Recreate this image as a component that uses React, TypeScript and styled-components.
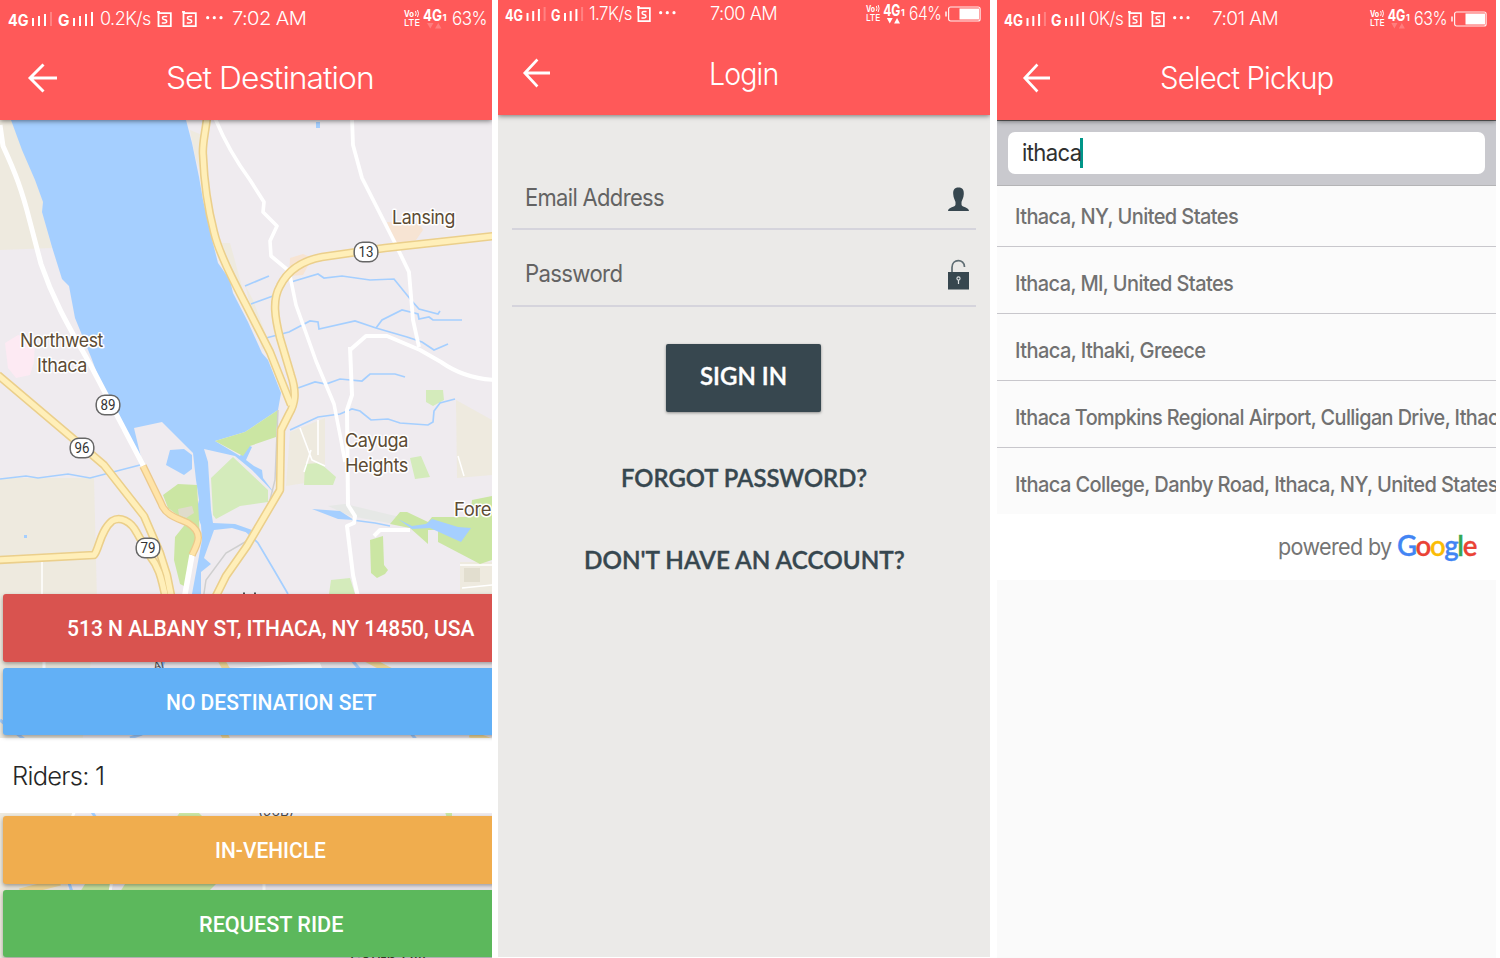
import React, { useLayoutEffect, useRef, useState } from 'react';
import styled, { createGlobalStyle, css } from 'styled-components';

const Global = createGlobalStyle`
  *, *::before, *::after { box-sizing: border-box; }
  html, body { margin: 0; padding: 0; background: #fff; overflow: hidden; }
  body { font-family: Inter, Roboto, "Liberation Sans", sans-serif; }
`;

/* ---------- text squeezed to a given width ---------- */

const FitBox = styled.span<{ $w: number; $size: number; $weight: number; $font?: string; $gap?: number; $up?: number; $down?: number; $track?: number; $thick?: number }>`
  display: block;
  flex: none;
  width: ${p => p.$w}px;
  margin-left: ${p => p.$gap ?? 0}px;
  padding-top: ${p => p.$down ?? 0}px;
  padding-bottom: ${p => p.$up ?? 0}px;
  white-space: nowrap;
  font-size: ${p => p.$size}px;
  font-weight: ${p => p.$weight};
  letter-spacing: ${p => p.$track ?? 0}em;
  line-height: 1.25;
  ${p => p.$font && css`font-family: ${p.$font}, sans-serif;`}
  ${p => p.$thick && css`-webkit-text-stroke: ${p.$thick}px currentColor;`}
`;
const FitInner = styled.span`
  display: inline-block;
  transform-origin: 0 50%;
`;

type FitProps = { w: number; size: number; weight?: number; font?: string; gap?: number; up?: number; down?: number; track?: number; thick?: number; children: React.ReactNode };
function Fit({ w, size, weight = 400, font, gap, up, down, track, thick, children }: FitProps) {
  const ref = useRef<HTMLSpanElement>(null);
  const [scale, setScale] = useState(1);
  useLayoutEffect(() => {
    const natural = ref.current?.offsetWidth;
    if (natural) setScale(w / natural);
  }, [w]);
  return (
    <FitBox $w={w} $size={size} $weight={weight} $font={font} $gap={gap} $up={up} $down={down} $thick={thick} $track={track ?? (font ? 0 : -0.03)}>
      <FitInner ref={ref} style={{ transform: `scaleX(${scale})` }}>{children}</FitInner>
    </FitBox>
  );
}

/* ---------- frame ---------- */

const Page = styled.main`
  display: flex;
  width: 1500px;
  height: 958px;
  background: #fff;
`;
const Screen = styled.section<{ $w: number; $h?: number; $gap?: number; $bg: string }>`
  display: flex;
  flex-direction: column;
  flex: none;
  width: ${p => p.$w}px;
  height: ${p => p.$h ?? 958}px;
  margin-left: ${p => p.$gap ?? 0}px;
  background: ${p => p.$bg};
  overflow: hidden;
`;
const Header = styled.header<{ $h: number }>`
  position: relative;
  z-index: 2;
  flex: none;
  height: ${p => p.$h}px;
  background: #ff5959;
  color: #fff;
  box-shadow: 0 1px 5px rgba(0, 0, 0, 0.5);
`;
const StatusBar = styled.div<{ $h: number }>`
  display: flex;
  align-items: center;
  height: ${p => p.$h}px;
`;
const TitleBar = styled.div<{ $h: number; $top?: number }>`
  display: flex;
  align-items: center;
  height: ${p => p.$h}px;
  padding-top: ${p => p.$top ?? 0}px;
`;
const Glyph = styled.svg<{ $gap?: number; $lift?: number }>`
  display: block;
  flex: none;
  overflow: visible;
  margin-left: ${p => p.$gap ?? 0}px;
  margin-bottom: ${p => p.$lift ?? 0}px;
`;

function Signal({ label, full, w, gap, first, pitch = 6 }: { label: string; full?: boolean; w: number; gap: number; first: number; pitch?: number }) {
  const hs = [8, 10, 12, 14];
  return (
    <Glyph $gap={gap} width={w} height="20" viewBox={`0 0 ${w} 20`} fill="#fff">
      <text x="0" y="17" fontSize="15.5" fontWeight="700" fontFamily="Inter" textLength={first - 4} lengthAdjust="spacingAndGlyphs">{label}</text>
      {hs.map((h, i) => (
        <rect key={h} x={first - 0.5 + i * pitch} y={17 - h} width="2" height={h} opacity={i === 3 && !full ? 0.25 : 1} />
      ))}
    </Glyph>
  );
}
function AlarmIcon({ gap, w = 15 }: { gap: number; w?: number }) {
  return (
    <Glyph $gap={gap} width={w} height="18" viewBox="0 0 15 18" preserveAspectRatio="none" fill="none" stroke="#fff">
      <path d="M1.500 3.200H13.800V16.200H1.500V1" strokeWidth="1.800" />
      <path d="M0 1.900h3" strokeWidth="1.600" />
      <path d="M10.200 6.500H7.400C4.800 6.500 4.700 9.200 7.300 9.600C10.500 10 10.300 13 7.600 13H4.800" strokeWidth="1.500" />
    </Glyph>
  );
}
function Dots({ gap }: { gap: number }) {
  return (
    <Glyph $gap={gap} width="18" height="6" viewBox="0 0 18 6" fill="#fff">
      <circle cx="1.700" cy="1.700" r="1.600" /><circle cx="8.300" cy="1.700" r="1.600" /><circle cx="15" cy="1.700" r="1.600" />
    </Glyph>
  );
}
function Network({ gap, active, w = 44 }: { gap: number; active?: boolean; w?: number }) {
  return (
    <Glyph $gap={gap} $lift={1} width={w} height="22" viewBox="0 0 44 22" preserveAspectRatio="none" fill="#fff" fontFamily="Inter">
      <text x="1" y="10" fontSize="8.500" fontWeight="700" textLength="10" lengthAdjust="spacingAndGlyphs">Vo</text>
      <path d="M12.500 4q1.300 2.500 0 5M14.500 3q2 3.500 0 7" fill="none" stroke="#fff" strokeWidth="1" />
      <text x="1" y="19" fontSize="9.500" fontWeight="500" textLength="16" lengthAdjust="spacingAndGlyphs">LTE</text>
      <text x="20" y="14" fontSize="16.500" fontWeight="700" textLength="19" lengthAdjust="spacingAndGlyphs">4G</text>
      <text x="39.600" y="14" fontSize="9.500" fontWeight="700">1</text>
      <path d="M24 16h6.500l-3.250 5.500zM32 21.500h6.500l-3.250-5.500z" opacity={active ? 1 : 0.22} />
    </Glyph>
  );
}
function Battery({ gap }: { gap: number }) {
  return (
    <Glyph $gap={gap} width="37" height="16" viewBox="0 0 37 16">
      <rect x="0.300" y="5.500" width="1.400" height="5" fill="#fff" />
      <rect x="3.600" y="1" width="31.500" height="14" rx="2" fill="none" stroke="#fff" strokeWidth="1.200" opacity="0.900" />
      <rect x="14.500" y="2.500" width="19.500" height="11" fill="#fff" />
    </Glyph>
  );
}
function BackArrow({ gap, w }: { gap: number; w: number }) {
  return (
    <Glyph $gap={gap} $lift={2} width={w} height="30" viewBox="0 0 29 30" preserveAspectRatio="none" fill="none" stroke="#fff" strokeWidth="2.900">
      <path d="M15.500 1.500 2 15 15.500 28.500M2 15H29" />
    </Glyph>
  );
}

/* ---------- destination screen ---------- */

const MapArea = styled.div`
  position: relative;
  flex: 1;
  overflow: hidden;
`;
const MapSvg = styled.svg`
  position: absolute;
  inset: 0;
  display: block;
`;
const Controls = styled.div`
  position: relative;
  display: flex;
  flex-direction: column;
  width: 536px;
  padding-top: 474px;
`;
const ActionButton = styled.button<{ $bg: string; $h: number; $mt?: number }>`
  display: flex;
  align-items: center;
  justify-content: center;
  flex: none;
  position: relative;
  width: 535px;
  height: ${p => p.$h}px;
  margin: ${p => p.$mt ?? 0}px 0 0 3px;
  padding: 0;
  border: 0;
  border-radius: 3px;
  background: ${p => p.$bg};
  color: #fff;
  box-shadow: 0 2px 4px rgba(0, 0, 0, 0.35);
`;
const RidersRow = styled.div`
  display: flex;
  align-items: center;
  height: 75px;
  margin-top: 3px;
  background: #fff;
  color: #262626;
`;

const YELLOW_ROADS = [
  'M207 118C205 135 202 145 203 155C204 180 207 205 214 232C219 253 232 278 246 305L270 352L291 405',
  'M495 236L440 242L385 248L322 257C300 261 287 272 280 286C272 300 275 318 280 338L291 375C297 393 295 404 289 414L281 430L280 490L247 546L226 576L214 600L212 660',
  'M-2 375L70 436L104 465L144 516L160 553L167 575L172 600',
  'M-2 560L94 555C99 550 100 531 112 521C120 516 131 521 137 533L150 556C158 566 161 575 166 600',
];
const WHITE_ROADS: [string, number][] = [
  ['M215 118Q228 150 250 180L264 202L263 212L277 226L270 241L271 256L289 271L296 305L316 361L334 404L341 440L345 462', 3.6],
  ['M352 118L353 145L362 178L395 243L409 272L413 320L419 347', 3.8],
  ['M350 350L366 336L387 336L420 350L441 362C458 374 475 379 495 380', 4],
  ['M350 347L352 395L347 410L348 505L355 516L354 523L347 526L353 575L361 610', 4],
  ['M374 536L380 530L410 530', 4],
  ['M300 428L312 460L325 466M311 450L304 472M318 420L318 455', 1.6],
];
const STREAMS = [
  'M245 286L269 276M251 304L273 296M291 282L318 274L324 278L342 276L370 280L394 279L411 300L419 309L438 314L440 311',
  'M266 338L289 332L310 321L318 322L319 329L355 321L376 328L407 337L422 342L434 350L448 344M376 328L382 320L402 310L418 314L419 319L429 317L433 320L462 320',
  'M298 388L315 382L326 384L340 379L362 381L370 374L395 374L405 377',
  'M290 430L318 417L340 414L352 409L360 411L371 420L388 419L400 423L428 425L433 422L434 411L440 403L455 399',
  'M0 479L26 476L38 478L68 474L90 478L140 465',
  'M245 530L258 543L274 570L288 594',
  'M352 520L375 523L390 526',
];
const LABELS: [string, number, number, number][] = [
  ['Northwest', 20, 347, 83],
  ['Ithaca', 37, 372, 50],
  ['Lansing', 392, 223.5, 63],
  ['Cayuga', 345, 447, 63],
  ['Heights', 345, 472, 63],
  ['Fore', 454, 515.5, 37],
];
const SHIELDS: [string, number, number][] = [['13', 366, 252], ['89', 108, 405], ['96', 82, 448], ['79', 148, 548]];

function CityMap() {
  return (
    <MapSvg width="492" height="838" viewBox="0 120 492 838">
      <rect y="120" width="492" height="838" fill="#efebef" />
      <g fill="#eeeadf">
        <path d="M0 120H11L35 180L43 202L42 212L52 248L0 250z" />
        <path d="M0 478L94 478L97 600L60 960H0z" />
        <path d="M290 432L325 418L325 480L286 486z" />
        <path d="M456 400L492 420V475L457 478z" />
        <path d="M460 562H492V596H460zM190 130L202 135L204 180L196 160zM222 243H230L243 290L236 292z" />
        <path d="M245 285L253 300L268 340L262 350z" />
      </g>
      <path d="M387 222L420 224L423 230L416 240L395 246zM290 258L303 254L312 258L303 275L289 276z" fill="#f7e4d3" />
      <path d="M5 343L18 335L35 340L34 362L30 375L16 378L8 368z" fill="#fdeaf3" />
      <path d="M328 506L345 504L400 517L394 524L350 516z" fill="#e6e8e6" />
      <path d="M11 120L22 150L35 180L43 202L42 212L52 247L62 279L69 286L75 318L91 357L104 392L118 420L122 430L127 432L143 466L134 428L162 422L193 453L196 480L199 500L196 512L201 525L202 540L192 594L192 600H201V572L211 564L204 558L214 530L232 528L252 534V530L235 524L213 523L211 510L208 462L204 449L235 456L252 470L275 494L263 478L262 470L254 466L246 460L252 447L246 444L244 450L240 456L215 441L245 432L278 410L281 393L268 360L262 353L248 322L233 293L230 280L218 263L213 243L203 200L199 177L192 143L186 120z" fill="#a5cfff" />
      <path d="M170 450L184 449L192 455L192 469L184 475L166 465z" fill="#a5cfff" />
      <path d="M316 122h4v6h-4zM24 535h3v3h-3z" fill="#a5cfff" />
      <g fill="#cbe6a3">
        <path d="M215 441L245 432L278 410L276 437L250 446L243 456z" />
        <path d="M163 495L178 484L197 485L199 520L200 545L192 555L184 586L180 584L174 560L175 537L187 522L168 508z" />
        <path d="M370 540L383 536L384 565L388 570L385 574L377 578L371 573z" />
        <path d="M390 524L400 512L407 512L428 522L432 517L470 517L472 500L492 496V560L480 564L438 542V530L428 530L428 544L410 528z" />
      </g>
      <g fill="#d4ebbb">
        <path d="M211 478L233 457L250 473L268 490L268 502L240 506L216 519L213 515z" />
        <path d="M426 390H443L444 400L433 406L426 402zM305 464L320 463L336 477L333 485H304zM410 458L421 456L430 477L415 479zM331 580L350 578L355 594H329z" />
      </g>
      <path d="M178 509L192 506L194 513L186 518L179 515z" fill="#dfdccb" />
      <path d="M312 509L340 511L354 520L338 519zM398 519L412 526L426 524L432 519L458 527L471 528L461 542L430 528L412 529z" fill="#a5cfff" />
      <g fill="none" stroke="#a5cfff" strokeWidth="1.7">{STREAMS.map(d => <path key={d} d={d} />)}</g>
      <path d="M278 410L275 480L270 500M252 538L226 553L206 580L203 600" fill="none" stroke="#cfcfcf" strokeWidth="1.500" />
      <path d="M42 560V600M458 456L464 476M460 565H492M462 588L492 585" stroke="#fff" strokeWidth="1.500" fill="none" />
      <path d="M464 568h16v14h-16z" fill="#e2decf" />
      <g fill="none" stroke="#fff" strokeLinejoin="round">{WHITE_ROADS.map(([d, w]) => <path key={d} d={d} strokeWidth={w} />)}</g>
      <path d="M0 125L3 146C15 172 22 190 30 222L41 264C55 305 72 332 90 364L144 467" fill="none" stroke="#fff" strokeWidth="5" />
      <path d="M192 555L184 600" stroke="#fff" strokeWidth="5.500" />
      <path d="M143 466L161 503C165 516 180 519 188 523C204 533 198 543 192 555" fill="none" stroke="#ecc98c" strokeWidth="7.500" />
      <path d="M143 466L161 503C165 516 180 519 188 523C204 533 198 543 192 555" fill="none" stroke="#ffe4a8" strokeWidth="5" />
      <g fill="none" stroke="#ebcf8b" strokeWidth="8.500" strokeLinejoin="round">{YELLOW_ROADS.map(d => <path key={d} d={d} />)}</g>
      <g fill="none" stroke="#ffefb9" strokeWidth="5.400" strokeLinejoin="round">{YELLOW_ROADS.map(d => <path key={d} d={d} />)}</g>

      {/* slivers that stay visible between the action buttons */}
      <path d="M229 668L320 663L322 668z" fill="#fff" />
      <path d="M365 658L392 672M220 658L228 672M20 892L60 882M470 734L492 742M222 730L228 742" stroke="#f5dc9a" strokeWidth="7" />
      <path d="M165 658L160 672M350 658L362 672M0 720L25 740M130 738L142 734M410 732L418 742M68 880L72 892M150 880L156 892M92 812L96 818" stroke="#a5cfff" strokeWidth="3" />
      <path d="M180 812H198L204 818H176zM445 812H452V818H447zM85 884L112 884L108 892H80zM125 884H216L208 892H120z" fill="#cbe6a3" />
      <path d="M44 658V672M75 810L72 818M264 880V892M112 880L110 892" stroke="#fff" strokeWidth="3" />
      <g fontFamily="Inter" fill="#4d4d4d" fontSize="13">
        <text x="258" y="815.500" textLength="36" lengthAdjust="spacingAndGlyphs">(96B)</text>
        <text x="350" y="967" fontSize="17" fill="#4e4632" textLength="76">South Hill</text>
        <text x="154" y="669" fontSize="11" transform="rotate(-12 160 668)">Al</text>
        <path d="M243 594h2v-1.500h-2zM254 594h2v-1.500h-2z" />
      </g>

      <g fontFamily="Inter" fontSize="18.500" fontWeight="380" letterSpacing="-0.4" fill="#5c4b34" stroke="#fff" strokeWidth="3" strokeLinejoin="round" paintOrder="stroke">
        {LABELS.map(([t, x, y, w]) => <text key={t} x={x} y={y} textLength={w} lengthAdjust="spacingAndGlyphs">{t}</text>)}
      </g>
      {SHIELDS.map(([n, x, y]) => (
        <g key={n}>
          <rect x={x - 11.800} y={y - 9.800} width="23.600" height="19.600" rx="8.500" fill="#fff" stroke="#666" strokeWidth="1.500" />
          <text x={x - 7.500} y={y + 4.800} fontFamily="Roboto" fontSize="14" fill="#333" textLength="15" lengthAdjust="spacingAndGlyphs">{n}</text>
        </g>
      ))}
    </MapSvg>
  );
}

/* ---------- login screen ---------- */

const LoginBody = styled.div`
  display: flex;
  flex-direction: column;
  align-items: center;
  padding: 50px 14px 0;
  color: #37474f;
`;
const Field = styled.label<{ $h: number }>`
  display: flex;
  align-items: flex-end;
  justify-content: space-between;
  align-self: stretch;
  height: ${p => p.$h}px;
  padding: 0 6px 15px 13px;
  border-bottom: 2px solid #d5d4dc;
  color: #636363;
`;
const SignInButton = styled.button`
  display: flex;
  align-items: center;
  justify-content: center;
  width: 155px;
  height: 68px;
  margin: 37px 0 0 -1px;
  padding: 0;
  border: 0;
  border-radius: 2px;
  background: #37474f;
  color: #fff;
  box-shadow: 0 1px 3px rgba(0, 0, 0, 0.4);
`;
const LinkButton = styled.button<{ $mt: number }>`
  display: flex;
  margin: ${p => p.$mt}px 0 0 0;
  padding: 0;
  border: 0;
  background: none;
  color: #37474f;
`;

/* ---------- pickup screen ---------- */

const SearchBar = styled.div`
  display: flex;
  flex: none;
  height: 66px;
  padding: 11px 11px 12px;
  border-top: 1px solid #666;
  border-bottom: 1px solid #b4b4b6;
  background: #c9c9ce;
`;
const SearchInput = styled.div`
  display: flex;
  align-items: center;
  flex: 1;
  height: 42px;
  padding-left: 14px;
  border-radius: 7px;
  background: #fff;
  color: #303030;
`;
const Caret = styled.i`
  width: 3px;
  height: 30px;
  margin-left: -1px;
  background: #009688;
`;
const Result = styled.div`
  display: flex;
  align-items: center;
  flex: none;
  height: 67px;
  padding: 7px 0 0 18px;
  border-top: 1px solid #c8c7cc;
  background: #fbfbfb;
  color: #717171;
  overflow: hidden;
  &:first-child { height: 60px; border-top: 0; padding-top: 2px; }
`;
const Results = styled.div`
  display: flex;
  flex-direction: column;
`;
const Attribution = styled.div`
  display: flex;
  align-items: center;
  flex: none;
  height: 66px;
  padding-left: 281px;
  background: #fff;
  color: #757575;
`;
const Letter = styled.b<{ $c: string }>`
  font-weight: inherit;
  color: ${p => p.$c};
`;

const PLACES: [string, number][] = [
  ['Ithaca, NY, United States', 223],
  ['Ithaca, MI, United States', 218],
  ['Ithaca, Ithaki, Greece', 190],
  ['Ithaca Tompkins Regional Airport, Culligan Drive, Ithaca', 495],
  ['Ithaca College, Danby Road, Ithaca, NY, United States', 483],
];
const GOOGLE: [string, string][] = [['G', '#4285f4'], ['o', '#ea4335'], ['o', '#fbbc05'], ['g', '#4285f4'], ['l', '#34a853'], ['e', '#ea4335']];

export default function App() {
  return (
    <>
      <Global />
      <Page>
        <Screen $w={492} $bg="#efebef">
          <Header $h={120}>
            <StatusBar $h={37}>
              <Signal label="4G" w={44} gap={8} first={24.5} />
              <Signal label="G" w={36} gap={6} first={15.5} full />
              <Fit w={51} size={18} weight={350} gap={6} down={2}>0.2K/s</Fit>
              <AlarmIcon gap={6} />
              <AlarmIcon gap={10} />
              <Dots gap={9} />
              <Fit w={74} size={18.5} weight={350} gap={8}>7:02 AM</Fit>
              <Network gap={97} active={false} />
              <Fit w={35} size={18.5} weight={350} gap={5} down={1}>63%</Fit>
            </StatusBar>
            <TitleBar $h={83}>
              <BackArrow gap={28} w={29} />
              <Fit w={208} size={31} weight={330} gap={109}>Set Destination</Fit>
            </TitleBar>
          </Header>
          <MapArea>
            <CityMap />
            <Controls>
              <ActionButton $bg="#d9534f" $h={68}><Fit w={407} size={21.5} weight={500} font="Roboto" down={2}>513 N ALBANY ST, ITHACA, NY 14850, USA</Fit></ActionButton>
              <ActionButton $bg="#62b0f6" $h={67} $mt={6}><Fit w={210} size={21.5} weight={500} font="Roboto" down={3}>NO DESTINATION SET</Fit></ActionButton>
              <RidersRow><Fit w={92} size={25} weight={350} gap={12} down={2}>Riders: 1</Fit></RidersRow>
              <ActionButton $bg="#f0ad4e" $h={68} $mt={3}><Fit w={111} size={21.5} weight={500} font="Roboto" down={2}>IN-VEHICLE</Fit></ActionButton>
              <ActionButton $bg="#5cb85c" $h={67} $mt={6}><Fit w={144} size={21.5} weight={500} font="Roboto" down={3}>REQUEST RIDE</Fit></ActionButton>
            </Controls>
          </MapArea>
        </Screen>

        <Screen $w={492} $h={957} $gap={6} $bg="#ebeae8">
          <Header $h={115}>
            <StatusBar $h={27}>
              <Signal label="4G" w={40} gap={7} first={22} pitch={5.7} />
              <Signal label="G" w={32} gap={6} first={13.5} pitch={5.7} />
              <Fit w={43} size={18} weight={350} gap={6} down={1}>1.7K/s</Fit>
              <AlarmIcon gap={5} w={14} />
              <Dots gap={8} />
              <Fit w={67} size={18.5} weight={350} gap={33}>7:00 AM</Fit>
              <Network gap={88} active w={40} />
              <Fit w={32} size={18} weight={350} gap={4} down={1}>64%</Fit>
              <Battery gap={4} />
            </StatusBar>
            <TitleBar $h={88} $top={6}>
              <BackArrow gap={25} w={27} />
              <Fit w={69} size={31} weight={330} gap={159} down={1}>Login</Fit>
            </TitleBar>
          </Header>
          <LoginBody>
            <Field $h={65}>
              <Fit w={139} size={24} weight={400}>Email Address</Fit>
              <Glyph width="23" height="26" viewBox="0 0 23 26" fill="#37474f">
                <path d="M11.500 0.500C7.300 0.500 6 3 6.200 7C6.400 11 8 13 8.500 15V17.500C8.500 20.500 1 19.800 1 24H22C22 19.800 14.500 20.500 14.500 17.500V15C15 13 16.600 11 16.800 7C17 3 15.700 0.500 11.500 0.500z" />
              </Glyph>
            </Field>
            <Field $h={77}>
              <Fit w={97} size={24} weight={400} up={1}>Password</Fit>
              <Glyph width="23" height="32" viewBox="0 0 23 32" fill="none">
                <path d="M5 15V9.500C5 0.500 17.500 0.500 17.500 9" stroke="#5f6d73" strokeWidth="1.700" />
                <rect x="1" y="14" width="21" height="17.500" fill="#37474f" />
                <circle cx="11.500" cy="20.500" r="1.600" stroke="#dfe3e4" strokeWidth="1.100" />
                <path d="M11.500 22v4" stroke="#dfe3e4" strokeWidth="1.200" />
              </Glyph>
            </Field>
            <SignInButton><Fit w={87} size={24.5} weight={600} font="Lato" up={4} thick={0.4}>SIGN IN</Fit></SignInButton>
            <LinkButton $mt={50}><Fit w={246} size={25} weight={600} font="Lato" thick={0.4}>FORGOT PASSWORD?</Fit></LinkButton>
            <LinkButton $mt={51}><Fit w={321} size={25} weight={600} font="Lato" thick={0.4}>DON'T HAVE AN ACCOUNT?</Fit></LinkButton>
          </LoginBody>
        </Screen>

        <Screen $w={499} $gap={7} $bg="#fafafa">
          <Header $h={120}>
            <StatusBar $h={37}>
              <Signal label="4G" w={41} gap={7} first={23} pitch={5.8} />
              <Signal label="G" w={34} gap={5.5} first={14.5} pitch={5.7} full />
              <Fit w={34} size={18} weight={350} gap={4.5} down={2}>0K/s</Fit>
              <AlarmIcon gap={5} w={14} />
              <AlarmIcon gap={9} w={14} />
              <Dots gap={8} />
              <Fit w={66} size={18.5} weight={350} gap={21}>7:01 AM</Fit>
              <Network gap={91} active={false} w={41} />
              <Fit w={33} size={18.5} weight={350} gap={4} down={1}>63%</Fit>
              <Battery gap={4} />
            </StatusBar>
            <TitleBar $h={83}>
              <BackArrow gap={26} w={27} />
              <Fit w={173} size={31} weight={330} gap={110}>Select Pickup</Fit>
            </TitleBar>
          </Header>
          <SearchBar>
            <SearchInput>
              <Fit w={59} size={24} weight={400}>ithaca</Fit>
              <Caret />
            </SearchInput>
          </SearchBar>
          <Results>
            {PLACES.map(([name, w]) => (
              <Result key={name}><Fit w={w} size={22} weight={450}>{name}</Fit></Result>
            ))}
          </Results>
          <Attribution>
            <Fit w={114} size={22.5} weight={400} down={1}>powered by</Fit>
            <Fit w={79} size={29} weight={600} font="Lato" gap={5} up={4} track={-0.05} thick={0.3}>
              {GOOGLE.map(([ch, c], i) => <Letter key={i} $c={c}>{ch}</Letter>)}
            </Fit>
          </Attribution>
        </Screen>
      </Page>
    </>
  );
}
